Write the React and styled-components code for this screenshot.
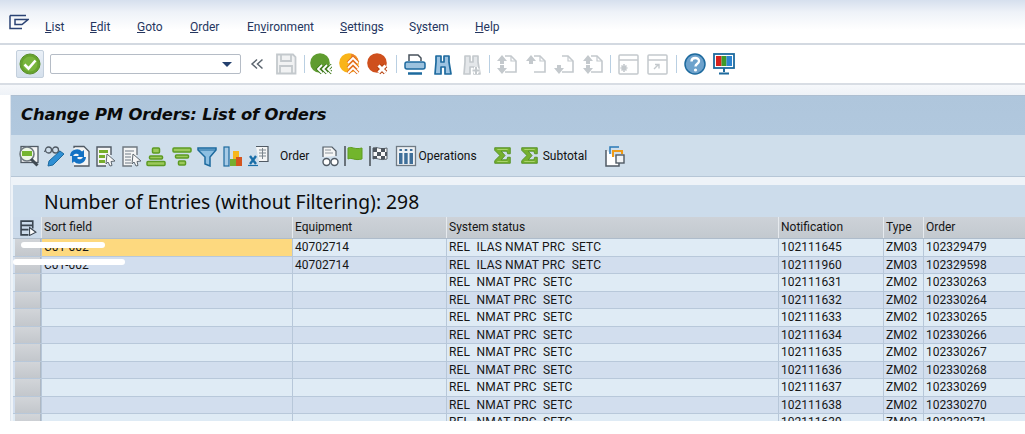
import React from "react";
import styled, { createGlobalStyle } from "styled-components";

const GlobalStyle = createGlobalStyle`
  html, body { margin: 0; padding: 0; background: #fff; }
  body { font-family: Roboto, "Noto Sans", sans-serif; color: #111; }
`;

const MENUS = [
  { label: <><u>L</u>ist</>, width: 45 },
  { label: <><u>E</u>dit</>, width: 47 },
  { label: <><u>G</u>oto</>, width: 53 },
  { label: <><u>O</u>rder</>, width: 57 },
  { label: <>En<u>v</u>ironment</>, width: 93 },
  { label: <><u>S</u>ettings</>, width: 69 },
  { label: <>S<u>y</u>stem</>, width: 66 },
  { label: <><u>H</u>elp</>, width: 40 },
];

const COLUMNS = "28px 1px 250px 1px 153px 1px 331px 1px 104px 1px 39px 1px 100px";

const ROWS = [
  ["C01-002", "40702714", "REL  ILAS NMAT PRC  SETC", "102111645", "ZM03", "102329479"],
  ["C01-002", "40702714", "REL  ILAS NMAT PRC  SETC", "102111960", "ZM03", "102329598"],
  ["", "", "REL  NMAT PRC  SETC", "102111631", "ZM02", "102330263"],
  ["", "", "REL  NMAT PRC  SETC", "102111632", "ZM02", "102330264"],
  ["", "", "REL  NMAT PRC  SETC", "102111633", "ZM02", "102330265"],
  ["", "", "REL  NMAT PRC  SETC", "102111634", "ZM02", "102330266"],
  ["", "", "REL  NMAT PRC  SETC", "102111635", "ZM02", "102330267"],
  ["", "", "REL  NMAT PRC  SETC", "102111636", "ZM02", "102330268"],
  ["", "", "REL  NMAT PRC  SETC", "102111637", "ZM02", "102330269"],
  ["", "", "REL  NMAT PRC  SETC", "102111638", "ZM02", "102330270"],
  ["", "", "REL  NMAT PRC  SETC", "102111639", "ZM02", "102330271"],
];

const Page = styled.div`
  width: 1025px;
  height: 434px;
  overflow: hidden;
  background: #fff;
`;

const Shell = styled.div`
  height: 421px;
  overflow: hidden;
  display: flex;
  flex-direction: column;
`;

const MenuBar = styled.div`
  height: 45px;
  box-sizing: border-box;
  border-bottom: 2px solid #d3d9e1;
  background: linear-gradient(#d6e0ee 0, #eef2f8 12px, #fff 30px);
  display: flex;
  position: relative;
  padding: 0 0 0 45px;
  align-items: flex-end;
`;

const MenuIcon = styled.svg`
  position: absolute;
  left: 9px;
  top: 14px;
`;

const MenuItem = styled.span`
  width: ${(p) => p.$width}px;
  font-size: 12px;
  line-height: 17px;
  color: #25365f;
  padding-bottom: 7px;
  flex: none;
  u { text-underline-offset: 1px; }
`;

const Toolbar = styled.div`
  height: 40px;
  box-sizing: border-box;
  border-bottom: 2px solid #d8dde4;
  background: #fff;
  display: flex;
  align-items: center;
  padding: 0 0 0 16px;
`;

const OkButton = styled.div`
  width: 26px;
  height: 26px;
  border: 1px solid #c3cfdc;
  border-radius: 2px;
  background: linear-gradient(#eaf0f7, #d5e0ec);
  display: flex;
  align-items: center;
  justify-content: center;
  margin-right: 6px;
`;

const Command = styled.div`
  width: 191px;
  height: 20px;
  box-sizing: border-box;
  border: 1px solid #b5bcc6;
  border-radius: 2px;
  background: #fff;
  position: relative;
  margin-right: 3px;
  &::after {
    content: "";
    position: absolute;
    right: 8px;
    top: 7px;
    border-left: 5px solid transparent;
    border-right: 5px solid transparent;
    border-top: 5px solid #24406e;
  }
`;

const Slot = styled.div`
  width: ${(p) => p.$w || 28.5}px;
  height: 24px;
  display: flex;
  align-items: center;
  justify-content: center;
  flex: none;
`;

const Sep = styled.div`
  width: 1px;
  height: 18px;
  margin: 0 ${(p) => p.$m || 4}px;
  background: #b9cfe2;
  flex: none;
`;

const Gap = styled.div`
  height: 10px;
  flex: none;
  background: linear-gradient(#f6f8fb, #eef2f7);
`;

const Main = styled.div`
  margin-left: 10px;
  flex: 1;
  display: flex;
  flex-direction: column;
  border-left: 1px solid #dfe6ee;
  background: #eef3f8;
  min-height: 0;
`;

const TitleBar = styled.div`
  height: 40px;
  box-sizing: border-box;
  border-top: 1px solid #aebfd1;
  background: linear-gradient(#afc6dc, #b1c8de);
  font-family: "DejaVu Sans", sans-serif;
  font-weight: bold;
  font-style: italic;
  font-size: 16.4px;
  letter-spacing: -0.15px;
  line-height: 37px;
  padding-left: 10px;
  color: #0b0b0b;
`;

const AppBar = styled.div`
  height: 42px;
  box-sizing: border-box;
  border-bottom: 1px solid #b6c6d6;
  background: #cfdeeb;
  display: flex;
  align-items: center;
  padding-left: 5px;
`;

const BarLabel = styled.span`
  font-size: 12px;
  color: #111;
  margin: 0 ${(p) => p.$right || 0}px 0 ${(p) => p.$left || 0}px;
  flex: none;
`;

const Panel = styled.div`
  margin: 8px 0 0 2px;
  flex: 1;
  min-height: 0;
  background: #ccdceb;
  display: flex;
  flex-direction: column;
`;

const Heading = styled.div`
  height: 32px;
  box-sizing: border-box;
  padding: 4px 0 0 31px;
  font-family: "Noto Sans", sans-serif;
  font-size: 19.3px;
  line-height: 26px;
  color: #0c0c0c;
  flex: none;
`;

const HeaderRow = styled.div`
  display: grid;
  grid-template-columns: ${COLUMNS};
  height: 21px;
  flex: none;
  background: linear-gradient(#cdd2d8, #c3c9cf);
  border-bottom: 1px solid #aebccb;
`;

const HeaderCell = styled.div`
  font-size: 12px;
  line-height: 21px;
  padding-left: 2px;
  color: #161616;
  white-space: nowrap;
  overflow: hidden;
`;

const CornerCell = styled.div`
  display: flex;
  align-items: center;
  justify-content: center;
  background: #cbdaea;
  padding-left: 2px;
`;

const ColumnLine = styled.div`
  background: ${(p) => (p.$head ? "#e6eaee" : "#b7c7d9")};
`;

const DataRow = styled.div`
  display: grid;
  grid-template-columns: ${COLUMNS};
  height: 16.5px;
  flex: none;
  position: relative;
  background: ${(p) => (p.$odd ? "#d2deee" : "#dfebf5")};
  border-bottom: 1px solid #b8c8da;
`;

const RowHead = styled.div`
  background: linear-gradient(#d2d5d9, #c3c7cc);
  margin-left: 2px;
  border-right: 1px solid #aeb8c3;
`;

const DataCell = styled.div`
  font-size: 12px;
  line-height: 16px;
  padding-left: 2px;
  color: #161616;
  white-space: pre;
  overflow: hidden;
  background: ${(p) => (p.$picked ? "#fdd97f" : "transparent")};
`;

const StatusCell = styled(DataCell)`
  letter-spacing: 0.17px;
`;

/* the white marks that blank out the sort field in the picture */
const Redaction = styled.div`
  position: absolute;
  border-radius: 3px;
  background: #fff;
  top: ${(p) => p.$top}px;
  left: ${(p) => p.$left}px;
  width: ${(p) => p.$w}px;
  height: ${(p) => p.$h}px;
`;

const Icon = ({ children, w = 22, h = 22 }) => (
  <svg width={w} height={h} viewBox="0 0 22 22" fill="none">
    {children}
  </svg>
);

const grey = "#c4c9cd";
const blue = "#1d6a9e";
const dark = "#505a64";

const Disabled = ({ up, down }) => (
  <Icon>
    <path d="M9 3h6l5 5v11H9" stroke={grey} strokeWidth="1.6" />
    <path d="M15 3v5h5" stroke={grey} strokeWidth="1.2" />
    {up && <path d="M6 2l5 6H8v3H4V8H1z" fill={grey} />}
    {down && <path d="M6 21l5-6H8v-3H4v3H1z" fill={grey} />}
  </Icon>
);

const WindowIcon = ({ star }) => (
  <Icon>
    <rect x="2" y="2" width="19" height="19" rx="1" stroke={grey} strokeWidth="1.5" />
    <path d="M2 7h19" stroke={grey} strokeWidth="1.5" />
    {star ? (
      <path d="M7 11v8M3.500 15h7M4.500 12.500l5 5M9.500 12.500l-5 5" stroke={grey} strokeWidth="1.6" />
    ) : (
      <path d="M8 16l4-4M9 11.500h4v4" stroke={grey} strokeWidth="1.4" />
    )}
  </Icon>
);

const Binoculars = ({ color, plus }) => (
  <Icon>
    <path
      d="M4 3h5v6h3V3h5v6l2 12h-6v-7h-4v7H3L4 9z"
      fill={plus ? "#e4e7ea" : "#9cc3e2"}
      stroke={color}
      strokeWidth="1.7"
      strokeLinejoin="round"
    />
    {plus && <path d="M15 14v7M11.500 17.500h7" stroke="#fff" strokeWidth="4" />}
    {plus && <path d="M15 14v7M11.500 17.500h7" stroke={grey} strokeWidth="2" />}
  </Icon>
);

const Sigma = () => (
  <Icon w={19} h={19}>
    <path
      d="M2 2h18v7h-3l-1-3H9.500l4.500 5-4.500 5H16l1-3h3v7H2v-3l6-6-6-6z"
      fill="#76b02f"
      stroke="#4f8c1f"
      strokeWidth="1"
    />
    <path d="M5 4h12M5 18h12" stroke="#a9d36c" strokeWidth="1.200" />
  </Icon>
);

function App() {
  return (
    <Page>
      <GlobalStyle />
      <Shell>
        <MenuBar>
          <MenuIcon width="20" height="16" viewBox="0 0 20 16" fill="none">
            <path d="M1 1.500h16M1 1.500v13h12M6 5.500h13L13 10.500H6z" stroke="#2b4374" strokeWidth="1.5" />
          </MenuIcon>
          {MENUS.map((menu, i) => (
            <MenuItem key={i} $width={menu.width}>
              {menu.label}
            </MenuItem>
          ))}
        </MenuBar>

        <Toolbar>
          <OkButton>
            <svg width="22" height="22" viewBox="0 0 22 22">
              <circle cx="11" cy="11" r="10" fill="#66a32d" stroke="#5a8f2c" />
              <circle cx="11" cy="11" r="7.500" fill="#79b53d" />
              <path d="M5.500 11.500l4 4 7-8" stroke="#fff" strokeWidth="2.600" fill="none" />
            </svg>
          </OkButton>
          <Command />
          <Slot $w={26}>
            <svg width="14" height="14" viewBox="0 0 14 14" fill="none">
              <path d="M7 2.500L2 7l5 4.500M12.500 2.500L7.500 7l5 4.500" stroke="#5d6670" strokeWidth="1.500" />
            </svg>
          </Slot>
          <Slot $w={32}>
            <Icon>
              <path d="M2 1.500h16l2.500 2.500v16.500H2z" fill="#f1f2f3" stroke={grey} strokeWidth="1.800" />
              <path d="M6 2v6h10V2M5 20v-7h12v7" stroke={grey} strokeWidth="1.800" />
            </Icon>
          </Slot>
          <Sep $m={2} />
          <Slot>
            <Icon>
              <circle cx="10" cy="10" r="9.800" fill="#5f9c2f" />
              <path d="M12 12l-4 4 4 4M17 12l-4 4 4 4M22 12l-4 4 4 4" stroke="#3f7a1c" strokeWidth="3.600" />
              <path d="M12 12l-4 4 4 4M17 12l-4 4 4 4M22 12l-4 4 4 4" stroke="#fff" strokeWidth="1.800" />
            </Icon>
          </Slot>
          <Slot>
            <Icon>
              <circle cx="10" cy="10" r="9.800" fill="#f9b418" />
              <path d="M10 .2a9.800 9.800 0 0 1 9.800 9.800H12V.5z" fill="#ee8a2c" />
              <path d="M9 10l5-5 5 5M9 15l5-5 5 5M9 20l5-5 5 5" stroke="#e2701e" strokeWidth="3.800" />
              <path d="M9 10l5-5 5 5M9 15l5-5 5 5M9 20l5-5 5 5" stroke="#fff" strokeWidth="1.800" />
            </Icon>
          </Slot>
          <Slot>
            <Icon>
              <circle cx="10" cy="10" r="9.800" fill="#cf501d" />
              <path d="M11.500 12.500l7 7M18.500 12.500l-7 7" stroke="#b8430f" strokeWidth="5" />
              <path d="M11.500 12.500l7 7M18.500 12.500l-7 7" stroke="#fff" strokeWidth="3" />
            </Icon>
          </Slot>
          <Sep $m={3.5} />
          <Slot>
            <Icon>
              <path d="M5 8V2h9l3 3v3" stroke="#48525c" strokeWidth="1.500" />
              <rect x="1" y="9" width="20" height="7" rx="2" fill="#9cc2de" stroke={blue} strokeWidth="1.500" />
              <path d="M4 20.500h14" stroke={blue} strokeWidth="2.500" />
            </Icon>
          </Slot>
          <Slot>
            <Binoculars color={blue} />
          </Slot>
          <Slot>
            <Binoculars color={grey} plus />
          </Slot>
          <Sep $m={3} />
          <Slot>
            <Disabled up down />
          </Slot>
          <Slot>
            <Disabled up />
          </Slot>
          <Slot>
            <Disabled down />
          </Slot>
          <Slot>
            <Disabled up down />
          </Slot>
          <Sep $m={3} />
          <Slot>
            <WindowIcon star />
          </Slot>
          <Slot>
            <WindowIcon />
          </Slot>
          <Sep $m={4.5} />
          <Slot>
            <Icon>
              <circle cx="11" cy="11" r="10" fill="#6ea2cc" stroke={blue} strokeWidth="1.500" />
              <path d="M7.500 8.500c0-4.500 7.500-4.500 7.500-.5 0 3-3.500 2.500-3.500 5.500" stroke="#fff" strokeWidth="2.400" />
              <circle cx="11.500" cy="17" r="1.600" fill="#fff" />
            </Icon>
          </Slot>
          <Slot>
            <Icon>
              <rect x="1" y="1" width="20" height="14" fill="#fff" stroke={blue} strokeWidth="1.800" />
              <rect x="3" y="3" width="5.500" height="10" fill="#d8231f" />
              <rect x="8.500" y="3" width="5" height="10" fill="#3f9a29" />
              <rect x="13.500" y="3" width="5.500" height="10" fill="#2c84d0" />
              <path d="M11 15v4M6 20.500h10" stroke={blue} strokeWidth="2" />
            </Icon>
          </Slot>
        </Toolbar>

        <Gap />

        <Main>
          <TitleBar>Change PM Orders: List of Orders</TitleBar>
          <AppBar>
            <Slot $w={26}>
              <Icon>
                <rect x="3" y="1.500" width="17" height="16" fill="#f4f5f5" stroke={dark} strokeWidth="1.300" />
                <circle cx="9" cy="9" r="7" fill="#eef6e6" stroke="#707a82" strokeWidth="1.600" />
                <rect x="4" y="6" width="10" height="5" fill="#75b52f" />
                <path d="M13 14l6.500 6.500" stroke="#3f4a52" strokeWidth="3" />
              </Icon>
            </Slot>
            <Slot $w={25}>
              <Icon>
                <circle cx="4.500" cy="5" r="3" stroke={dark} strokeWidth="1.300" />
                <circle cx="11.500" cy="5" r="3" stroke={dark} strokeWidth="1.300" />
                <path d="M7.500 5h1M1.500 5L0 7M14.500 5L16 7" stroke={dark} />
                <path d="M4 21l1-5L16 6l4 3L9 20z" fill="#2f8fd4" stroke={blue} />
              </Icon>
            </Slot>
            <Slot $w={25.5}>
              <Icon>
                <path d="M5 3V1.500h10l5 5V21H5" fill="#f4f5f5" stroke={dark} strokeWidth="1.300" />
                <path d="M1 11a7 7 0 0 1 12-4.500l2-1.500v7H8l2-2a3.500 3.500 0 0 0-6 1z" fill="#1472c4" />
                <path d="M17 12a7 7 0 0 1-12 4.500L3 18v-7h7l-2 2a3.500 3.500 0 0 0 6-1z" fill="#1472c4" />
              </Icon>
            </Slot>
            <Slot $w={25.5}>
              <Icon>
                <path d="M12 21H3V2h14v8" fill="#f4f5f5" stroke={dark} strokeWidth="1.400" />
                <path d="M5 5h9v3H5zM5 10h6v3H5zM5 15h6v3H5z" fill="#76ad2c" />
                <path d="M13 9l8 7-4 .5 1 4-2 .5-2-4-2 2z" fill="#f7f7f7" stroke="#5e6870" />
              </Icon>
            </Slot>
            <Slot $w={25.5}>
              <Icon>
                <path d="M12 21H3V2h14v8" fill="#f4f5f5" stroke="#6f7880" strokeWidth="1.400" />
                <path d="M5 6h9M5 9h6M5 12h6M5 15h6M5 18h6" stroke="#9ba3aa" strokeWidth="1.300" />
                <path d="M13 9l8 7-4 .5 1 4-2 .5-2-4-2 2z" fill="#f7f7f7" stroke="#5e6870" />
              </Icon>
            </Slot>
            <Slot $w={25.5}>
              <Icon>
                <rect x="7.500" y="3" width="7" height="5" rx="1" fill="#9cc95c" stroke="#5c9a22" strokeWidth="1.500" />
                <rect x="4.500" y="11" width="13" height="3" rx="1" fill="#9cc95c" stroke="#5c9a22" strokeWidth="1.500" />
                <rect x="2" y="16.500" width="18" height="4" rx="1" fill="#9cc95c" stroke="#5c9a22" strokeWidth="1.500" />
              </Icon>
            </Slot>
            <Slot $w={25.5}>
              <Icon>
                <rect x="2" y="3" width="18" height="4" rx="1" fill="#9cc95c" stroke="#5c9a22" strokeWidth="1.500" />
                <rect x="4.500" y="10" width="13" height="3" rx="1" fill="#9cc95c" stroke="#5c9a22" strokeWidth="1.500" />
                <rect x="7.500" y="16" width="7" height="4" rx="1" fill="#9cc95c" stroke="#5c9a22" strokeWidth="1.500" />
              </Icon>
            </Slot>
            <Slot $w={25.5}>
              <Icon>
                <path d="M2 3h18v2l-6 7v9l-5-2v-7L2 5z" fill="#8dbfe2" stroke={blue} strokeWidth="1.500" />
                <path d="M2 5h18" stroke={blue} />
              </Icon>
            </Slot>
            <Slot $w={25.5}>
              <Icon>
                <rect x="2" y="2" width="5" height="19" fill="#a8cbe6" stroke={blue} strokeWidth="1.200" />
                <rect x="11" y="6" width="6" height="10" fill="#f6b61c" />
                <rect x="8" y="14" width="6" height="7" fill="#77ae2f" />
                <rect x="14" y="12" width="6" height="9" fill="#d4551e" />
              </Icon>
            </Slot>
            <Slot $w={25.5}>
              <Icon>
                <path d="M9 1.500h12v15H12" fill="#f4f5f5" stroke={dark} strokeWidth="1.200" />
                <path d="M12 5h7M12 8h7M12 11h7M15.500 3v11" stroke="#7b858d" />
                <path d="M3 11l6 8M9 11l-6 8" stroke="#1a6ea8" strokeWidth="2.400" />
                <path d="M1 20.500h10" stroke="#1a6ea8" strokeWidth="1.200" />
              </Icon>
            </Slot>
            <BarLabel $left={9} $right={9}>Order</BarLabel>
            <Slot $w={25}>
              <Icon>
                <path d="M3 12V2h9l4 4v5" fill="#f4f5f5" stroke={dark} strokeWidth="1.200" />
                <path d="M5 5h6M5 8h8" stroke="#8d959c" />
                <circle cx="6.500" cy="17" r="3.500" stroke={dark} strokeWidth="1.400" fill="#fff" />
                <circle cx="14.500" cy="17" r="3.500" stroke={dark} strokeWidth="1.400" fill="#fff" />
              </Icon>
            </Slot>
            <Slot $w={22}>
              <Icon>
                <path d="M2 1v20" stroke="#69727a" strokeWidth="2" />
                <path d="M5 3c4-2 6 2 14 0v11c-8 2-10-2-14 0z" fill="#72b52c" stroke="#5f9d22" />
              </Icon>
            </Slot>
            <Slot $w={28}>
              <Icon>
                <path d="M2 1v20" stroke="#69727a" strokeWidth="2" />
                <path d="M5 3c4-2 6 2 14 0v11c-8 2-10-2-14 0z" fill="#f7f7f7" stroke="#5a636b" />
                <path d="M5 3h4v4H5zM13 3h4v4h-4zM9 7h4v4H9zM17 7h2v4h-2zM5 11h4v3H5zM13 11h4v3h-4z" fill="#4e565e" />
              </Icon>
            </Slot>
            <Slot $w={25}>
              <Icon>
                <rect x="1.500" y="1.500" width="19" height="19" fill="#eef1f4" stroke="#6f7a84" strokeWidth="1.300" />
                <rect x="4" y="8" width="3.500" height="11" fill="#3f6f99" />
                <rect x="9.200" y="8" width="3.500" height="11" fill="#3f6f99" />
                <rect x="14.500" y="8" width="3.500" height="11" fill="#3f6f99" />
                <path d="M5.700 4v2M11 4v2M16.200 4v2" stroke="#3f6f99" strokeWidth="2.500" />
              </Icon>
            </Slot>
            <BarLabel $right={12}>Operations</BarLabel>
            <Slot $w={27}>
              <Sigma />
            </Slot>
            <Slot $w={27}>
              <Sigma />
            </Slot>
            <BarLabel $right={13}>Subtotal</BarLabel>
            <Slot $w={27}>
              <Icon>
                <path d="M3 5v16h13v-6" stroke={dark} strokeWidth="1.500" fill="#fff" />
                <path d="M7 9V2h9" stroke="#2a7ab8" strokeWidth="1.500" />
                <path d="M10 12V6h9v3" stroke="#ef9a16" strokeWidth="2" />
                <rect x="13" y="10" width="8" height="8" fill="#f1f3f5" stroke={dark} strokeWidth="1.400" />
              </Icon>
            </Slot>
          </AppBar>

          <Panel>
            <Heading>Number of Entries (without Filtering): 298</Heading>
            <HeaderRow>
              <CornerCell>
                <svg width="17" height="16" viewBox="0 0 16 15" fill="none">
                  <path d="M8 14H1V1h11v7M1 5h11M1 9h7" stroke="#3a4550" strokeWidth="1.500" />
                  <path d="M9 7l6 4.500-6 3z" fill="#fff" stroke="#3a4550" />
                </svg>
              </CornerCell>
              <ColumnLine $head />
              <HeaderCell>Sort field</HeaderCell>
              <ColumnLine $head />
              <HeaderCell>Equipment</HeaderCell>
              <ColumnLine $head />
              <HeaderCell>System status</HeaderCell>
              <ColumnLine $head />
              <HeaderCell>Notification</HeaderCell>
              <ColumnLine $head />
              <HeaderCell>Type</HeaderCell>
              <ColumnLine $head />
              <HeaderCell>Order</HeaderCell>
            </HeaderRow>
            {ROWS.map((row, i) => (
              <DataRow key={i} $odd={i % 2 === 1}>
                <RowHead />
                <ColumnLine />
                <DataCell $picked={i === 0}>{row[0]}</DataCell>
                <ColumnLine />
                <DataCell>{row[1]}</DataCell>
                <ColumnLine />
                <StatusCell>{row[2]}</StatusCell>
                <ColumnLine />
                <DataCell>{row[3]}</DataCell>
                <ColumnLine />
                <DataCell>{row[4]}</DataCell>
                <ColumnLine />
                <DataCell>{row[5]}</DataCell>
                {i === 0 && <Redaction $top={3} $left={8} $w={84} $h={6} />}
                {i === 1 && <Redaction $top={2} $left={0} $w={112} $h={6} />}
              </DataRow>
            ))}
          </Panel>
        </Main>
      </Shell>
    </Page>
  );
}

export default App;
